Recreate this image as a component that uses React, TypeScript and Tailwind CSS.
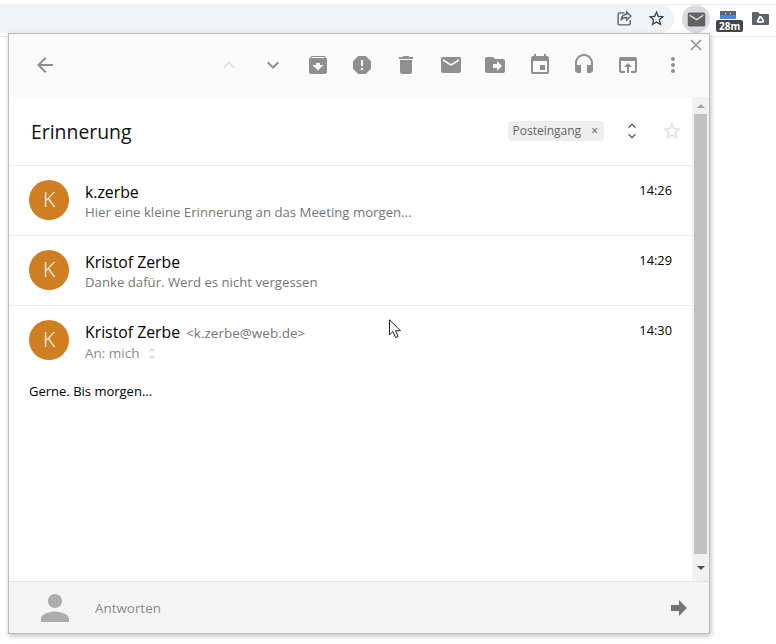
const ICON = {
  back: "M20 11H7.83l5.59-5.59L12 4l-8 8 8 8 1.41-1.41L7.83 13H20v-2z",
  up: "M7.41 15.41L12 10.83l4.59 4.58L18 14l-6-6-6 6z",
  down: "M7.41 8.59L12 13.17l4.59-4.58L18 10l-6 6-6-6 1.41-1.41z",
  archive:
    "M20.54 5.23l-1.39-1.68C18.88 3.21 18.47 3 18 3H6c-.47 0-.88.21-1.16.55L3.46 5.23C3.17 5.57 3 6.02 3 6.5V19c0 1.1.9 2 2 2h14c1.1 0 2-.9 2-2V6.5c0-.48-.17-.93-.46-1.27zM12 17.5L6.5 12H10v-2h4v2h3.5L12 17.5zM5.12 5l.81-1h12l.94 1H5.12z",
  report:
    "M15.73 3H8.27L3 8.27v7.46L8.27 21h7.46L21 15.73V8.27L15.73 3zM12 17.3c-.72 0-1.3-.58-1.3-1.3 0-.72.58-1.3 1.3-1.3.72 0 1.3.58 1.3 1.3 0 .72-.58 1.3-1.3 1.3zm1-4.3h-2V7h2v6z",
  trash: "M6 19c0 1.1.9 2 2 2h8c1.1 0 2-.9 2-2V7H6v12zM19 4h-3.5l-1-1h-5l-1 1H5v2h14V4z",
  mail: "M20 4H4c-1.1 0-1.99.9-1.99 2L2 18c0 1.1.9 2 2 2h16c1.1 0 2-.9 2-2V6c0-1.1-.9-2-2-2zm0 4l-8 5-8-5V6l8 5 8-5v2z",
  move: "M20 6h-8l-2-2H4c-1.1 0-1.99.9-1.99 2L2 18c0 1.1.9 2 2 2h16c1.1 0 2-.9 2-2V8c0-1.1-.9-2-2-2zm-6 12v-3h-4v-4h4V8l5 5-5 5z",
  event:
    "M17 12h-5v5h5v-5zM16 1v2H8V1H6v2H5c-1.11 0-1.99.9-1.99 2L3 19c0 1.1.89 2 2 2h14c1.1 0 2-.9 2-2V5c0-1.1-.9-2-2-2h-1V1h-2zm3 18H5V8h14v11z",
  headset:
    "M12 1c-4.97 0-9 4.03-9 9v7c0 1.66 1.34 3 3 3h3v-8H5v-2c0-3.87 3.13-7 7-7s7 3.13 7 7v2h-4v8h3c1.66 0 3-1.34 3-3v-7c0-4.97-4.03-9-9-9z",
  open: "M19 4H5c-1.11 0-2 .9-2 2v12c0 1.1.89 2 2 2h4v-2H5V8h14v10h-4v2h4c1.1 0 2-.9 2-2V6c0-1.1-.89-2-2-2zm-7 6l-4 4h3v6h2v-6h3l-4-4z",
  more: "M12 8c1.1 0 2-.9 2-2s-.9-2-2-2-2 .9-2 2 .9 2 2 2zm0 2c-1.1 0-2 .9-2 2s.9 2 2 2 2-.9 2-2-.9-2-2-2zm0 6c-1.1 0-2 .9-2 2s.9 2 2 2 2-.9 2-2-.9-2-2-2z",
  person:
    "M12 12c2.21 0 4-1.79 4-4s-1.79-4-4-4-4 1.79-4 4 1.79 4 4 4zm0 2c-2.67 0-8 1.34-8 4v2h16v-2c0-2.66-5.33-4-8-4z",
  star: "M22 9.24l-7.19-.62L12 2 9.19 8.63 2 9.24l5.46 4.73L5.82 21 12 17.27 18.18 21l-1.63-7.03L22 9.24zM12 15.4l-3.76 2.27 1-4.28-3.32-2.88 4.38-.38L12 6.1l1.71 4.04 4.38.38-3.32 2.88 1 4.28L12 15.4z",
};

function Icon({ d, className }: { d: string; className: string }) {
  return (
    <svg viewBox="0 0 24 24" className={className} fill="currentColor">
      <path d={d} />
    </svg>
  );
}

function ToolBtn({ d, faded }: { d: string; faded?: boolean }) {
  return (
    <div className="flex w-[44.4px] shrink-0 justify-center">
      <Icon d={d} className={faded ? "h-6 w-6 text-[#e4e4e4]" : "h-6 w-6 text-[#8f8f8f]"} />
    </div>
  );
}

function Avatar() {
  return (
    <div className="flex h-10 w-10 shrink-0 items-center justify-center rounded-full bg-[#cf7f22] text-[21px] font-light text-white">
      K
    </div>
  );
}

function Row({ name, snippet, time }: { name: string; snippet: string; time: string }) {
  return (
    <div className="flex h-[70px] border-b border-[#eeeeee] pl-5 pr-5 pt-[14px]">
      <Avatar />
      <div className="ml-4 min-w-0 flex-1 pt-[2px]">
        <div className="text-[15.8px] leading-[21px] text-black">{name}</div>
        <div className="text-[13.2px] leading-[18px] text-[#757575]">{snippet}</div>
      </div>
      <div className="text-[12.8px] leading-[20px] text-black">{time}</div>
    </div>
  );
}

export default function App() {
  return (
    <div className="relative h-[644px] w-[776px] overflow-hidden bg-white font-['Open_Sans',sans-serif]">
      {/* browser toolbar */}
      <div className="mt-1 flex h-[33px] items-start border-y border-[#e8eaed]">
        <div className="mt-[-1px] flex h-[29px] w-[674px] items-center justify-end gap-[14px] rounded-r-full bg-[#f1f3f4] pr-2">
          <svg viewBox="0 0 24 24" className="h-[17px] w-[17px] text-[#5f6368]" fill="none" stroke="currentColor" strokeWidth="2">
            <path d="M12 4H5a2 2 0 0 0-2 2v13a2 2 0 0 0 2 2h13a2 2 0 0 0 2-2v-5" />
            <path d="M15 3l6 5.5-6 5.5v-3.5c-4 0-6.500 1-8 4 .5-5 3.500-8 8-8.500z" />
          </svg>
          <Icon d={ICON.star} className="h-[19px] w-[19px] text-[#3c4043]" />
        </div>
        <div className="ml-2 flex h-7 w-7 shrink-0 items-center justify-center rounded-full bg-[#dadce0]">
          <Icon d={ICON.mail} className="h-[21px] w-[21px] text-[#616161]" />
        </div>
        <div className="relative ml-[10px] mt-[6px] h-[8px] w-[16px] bg-[#4a86e8]">
          <div className="flex h-[4px] items-center justify-center gap-[4px] bg-[#5a6472]">
            <div className="h-px w-px bg-white" />
            <div className="h-px w-px bg-white" />
          </div>
          <div className="absolute left-[-4px] top-[9px] rounded-[2px] bg-[#454545] px-[3px] text-[10px] font-bold leading-[12px] text-white">
            28m
          </div>
        </div>
        <svg viewBox="0 0 17 14" className="ml-[16px] mt-[6px] h-[14px] w-[17px] text-[#5f6368]" fill="currentColor">
          <path d="M1 1h5l2 2h8a1 1 0 0 1 1 1v9a1 1 0 0 1-1 1H1a1 1 0 0 1-1-1V2a1 1 0 0 1 1-1zm6.500 4L4.500 10l1 1.800h6l1-1.800-3-5h-2zm1 1.800L10.500 10h-4l2-3.200z" fillRule="evenodd" />
        </svg>
      </div>

      {/* popup */}
      <div className="absolute left-2 top-[33px] flex h-[601px] w-[702px] flex-col border border-[#bdbdbd] bg-white shadow-[1px_2px_5px_rgba(0,0,0,0.25)]">
        <div className="relative flex h-[63px] shrink-0 items-center bg-[#fafafa] pb-[2px] pl-6 pr-[14px]">
          <Icon d={ICON.back} className="h-6 w-6 text-[#8f8f8f]" />
          <div className="flex-1" />
          <ToolBtn d={ICON.up} faded />
          <ToolBtn d={ICON.down} />
          <ToolBtn d={ICON.archive} />
          <ToolBtn d={ICON.report} />
          <ToolBtn d={ICON.trash} />
          <ToolBtn d={ICON.mail} />
          <ToolBtn d={ICON.move} />
          <ToolBtn d={ICON.event} />
          <ToolBtn d={ICON.headset} />
          <ToolBtn d={ICON.open} />
          <ToolBtn d={ICON.more} />
          <svg viewBox="0 0 12 12" className="absolute right-[7px] top-[5px] h-[12px] w-[12px] text-[#8f8f8f]" stroke="currentColor" strokeWidth="1.500">
            <path d="M1 1l10 10M11 1L1 11" />
          </svg>
        </div>

        <div className="flex min-h-0 flex-1">
          <div className="min-w-0 flex-1">
            <div className="flex h-[69px] items-center border-b border-[#eeeeee] pl-[22px] pr-[9px]">
              <div className="flex-1 pt-[2px] text-[19.4px] text-[#111111]">Erinnerung</div>
              <div className="flex h-5 items-center rounded-[4px] bg-[#eeeeee] pl-[5px] pr-[6px] text-[12px] text-[#666666]">
                Posteingang
                <span className="ml-[10px] text-[12px] leading-none text-[#555555]">×</span>
              </div>
              <div className="ml-[20px] flex w-[16px] flex-col items-center">
                <Icon d={ICON.up} className="mb-[-5px] h-[16px] w-[16px] text-[#666666]" />
                <Icon d={ICON.down} className="mt-[-1px] h-[16px] w-[16px] text-[#666666]" />
              </div>
              <svg viewBox="0 0 24 24" className="ml-[21px] h-[22px] w-[22px] text-[#e0e0e0]" fill="currentColor">
                <path d={ICON.star} />
              </svg>
            </div>

            <Row name="k.zerbe" snippet="Hier eine kleine Erinnerung an das Meeting morgen..." time="14:26" />
            <Row name="Kristof Zerbe" snippet="Danke dafür. Werd es nicht vergessen" time="14:29" />

            <div className="flex pl-5 pr-5 pt-[14px]">
              <Avatar />
              <div className="ml-4 min-w-0 flex-1 pt-[2px]">
                <div className="text-[15.8px] leading-[21px] text-black">
                  Kristof Zerbe
                  <span className="ml-[6px] text-[13.5px] text-[#757575]">&lt;k.zerbe@web.de&gt;</span>
                </div>
                <div className="flex items-center text-[13.5px] leading-[18px] text-[#8a8a8a]">
                  An: mich
                  <div className="ml-[8px] flex w-[9px] flex-col items-center">
                    <Icon d={ICON.up} className="mb-[-3px] h-[10px] w-[10px] text-[#bdbdbd]" />
                    <Icon d={ICON.down} className="h-[10px] w-[10px] text-[#bdbdbd]" />
                  </div>
                </div>
              </div>
              <div className="text-[12.8px] leading-[20px] text-black">14:30</div>
            </div>

            <div className="mt-[20px] pl-5 text-[13px] leading-[18px] text-black">Gerne. Bis morgen...</div>
          </div>

          {/* scrollbar */}
          <div className="flex w-[17px] shrink-0 flex-col bg-[#f1f1f1]">
            <div className="flex h-[17px] items-center justify-center">
              <div className="h-0 w-0 border-x-[4px] border-b-[4px] border-x-transparent border-b-[#a3a3a3]" />
            </div>
            <div className="ml-[2px] w-[13px] flex-1 bg-[#c1c1c1]" />
            <div className="flex h-[27px] items-center justify-center">
              <div className="h-0 w-0 border-x-[4px] border-t-[4px] border-x-transparent border-t-[#505050]" />
            </div>
          </div>
        </div>

        <div className="flex h-[52px] shrink-0 items-center border-t border-[#e4e4e4] bg-[#f5f5f5] pl-[25px] pr-[22px]">
          <Icon d={ICON.person} className="h-[42px] w-[42px] text-[#adadad]" />
          <div className="ml-[19px] flex-1 pt-px text-[13.4px] text-[#8a8a8a]">Antworten</div>
          <svg viewBox="0 0 16 16" className="h-4 w-4 text-[#757575]" fill="currentColor">
            <path d="M0 5h8V0l8 8-8 8v-5H0z" />
          </svg>
        </div>
      </div>

      {/* mouse pointer */}
      <svg viewBox="0 0 13 20" className="absolute left-[389px] top-[319px] h-5 w-[13px]" fill="#fff" stroke="#222" strokeWidth="1">
        <path d="M.5.800v15l3.500-3.300 2.500 6 2.500-1-2.500-5.800h5z" />
      </svg>
    </div>
  );
}
